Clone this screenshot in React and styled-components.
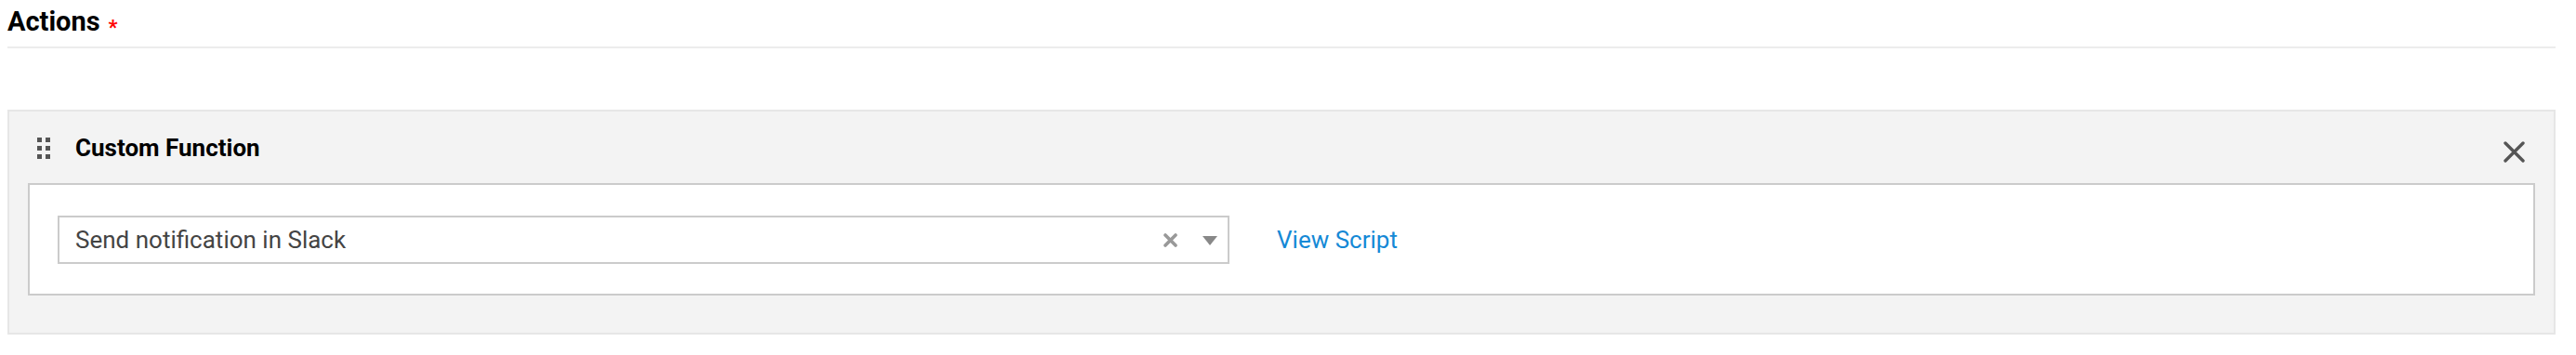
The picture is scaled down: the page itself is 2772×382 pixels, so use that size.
import React from 'react';
import styled, { createGlobalStyle } from 'styled-components';

const GlobalStyle = createGlobalStyle`
  html, body {
    margin: 0;
    padding: 0;
    background: #fff;
    font-family: Roboto, "Liberation Sans", Arial, sans-serif;
  }
`;

const Page = styled.div`
  width: 2742px;
  margin-left: 8px;
`;

const SectionHeader = styled.div`
  padding: 5px 0 9px;
  border-bottom: 2px solid #ececec;
  display: flex;
  align-items: flex-start;
`;

const SectionTitle = styled.h2`
  margin: 0;
  font-size: 29px;
  line-height: 36px;
  font-weight: 700;
  color: #000;
`;

const Required = styled.span`
  color: #f00;
  font-size: 22px;
  font-weight: 700;
  line-height: 22px;
  margin: 14px 0 0 9px;
`;

const Panel = styled.div`
  margin-top: 66px;
  background: #f3f3f3;
  border: 2px solid #e6e6e6;
  padding: 0 20px 40px;
`;

const PanelHeader = styled.div`
  display: flex;
  align-items: center;
  padding: 22px 11px 0 10px;
  margin-bottom: 21px;
`;

const DragHandle = styled.div`
  display: grid;
  grid-template-columns: repeat(2, 5px);
  grid-auto-rows: 5px;
  column-gap: 4px;
  row-gap: 4px;
  margin-right: 27px;

  span {
    background: #555;
  }
`;

const PanelTitle = styled.div`
  flex: 1;
  font-size: 26px;
  line-height: 34px;
  font-weight: 700;
  color: #000;
`;

const CloseButton = styled.button`
  border: 0;
  background: none;
  padding: 0;
  width: 23px;
  height: 23px;
  margin-top: 9px;
  cursor: pointer;
  display: flex;
`;

const Body = styled.div`
  background: #fff;
  border: 2px solid #cbcbcb;
  padding: 33px 30px 32px;
  display: flex;
  align-items: center;
`;

const Select = styled.div`
  width: 1261px;
  height: 52px;
  box-sizing: border-box;
  border: 2px solid #cbcbcb;
  display: flex;
  align-items: center;
  padding: 0 11px 0 17px;
`;

const SelectValue = styled.span`
  flex: 1;
  font-size: 26px;
  line-height: 48px;
  color: #444;
`;

const ClearIcon = styled.svg`
  width: 15px;
  height: 15px;
  margin-right: 27px;
`;

const Caret = styled.span`
  width: 0;
  height: 0;
  border-left: 8px solid transparent;
  border-right: 8px solid transparent;
  border-top: 10px solid #888;
  margin-top: 2px;
`;

const LinkButton = styled.a`
  margin-left: 51px;
  font-size: 26px;
  line-height: 34px;
  color: #1589d6;
  text-decoration: none;
  cursor: pointer;
`;

export default function App() {
  return (
    <>
      <GlobalStyle />
      <Page>
        <SectionHeader>
          <SectionTitle>Actions</SectionTitle>
          <Required>*</Required>
        </SectionHeader>

        <Panel>
          <PanelHeader>
            <DragHandle>
              <span /><span /><span /><span /><span /><span />
            </DragHandle>
            <PanelTitle>Custom Function</PanelTitle>
            <CloseButton aria-label="Remove">
              <svg width="23" height="23" viewBox="0 0 23 23">
                <path d="M2 2L21 21M21 2L2 21" stroke="#555" strokeWidth="3.4" strokeLinecap="round" />
              </svg>
            </CloseButton>
          </PanelHeader>

          <Body>
            <Select>
              <SelectValue>Send notification in Slack</SelectValue>
              <ClearIcon viewBox="0 0 15 15">
                <path d="M2 2L13 13M13 2L2 13" stroke="#999" strokeWidth="3.6" strokeLinecap="round" />
              </ClearIcon>
              <Caret />
            </Select>
            <LinkButton>View Script</LinkButton>
          </Body>
        </Panel>
      </Page>
    </>
  );
}
